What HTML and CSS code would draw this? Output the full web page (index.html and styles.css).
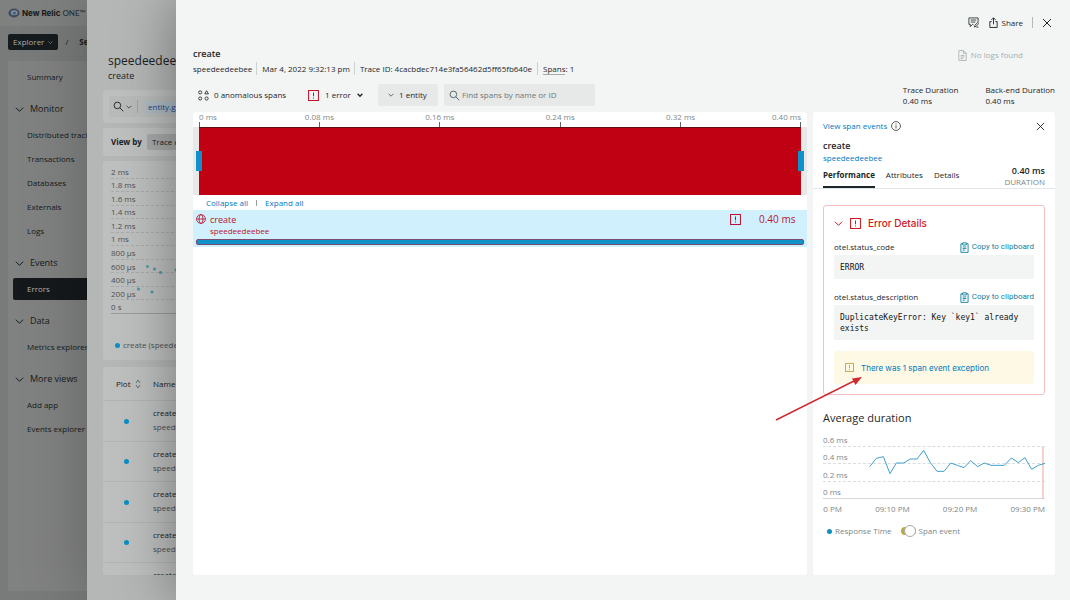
FILE: index.html
```html
<!DOCTYPE html>
<html lang="en">
<head>
<meta charset="utf-8">
<title>New Relic ONE - Trace details</title>
<link rel="stylesheet" href="styles.css">
</head>
<body>
<svg class="defs" aria-hidden="true">
  <symbol id="chev" viewBox="0 0 10 10"><path d="M1 3l4 4 4-4" fill="none" stroke="currentColor" stroke-width="1.1"/></symbol>
  <symbol id="chev-bold" viewBox="0 0 10 10"><path d="M1 3l4 4 4-4" fill="none" stroke="currentColor" stroke-width="2.2"/></symbol>
  <symbol id="alert" viewBox="0 0 12 12"><path d="M.6.6h10.8v10.8H.6zM6 2.8v4M6 8.2v1.2" fill="none" stroke="currentColor" stroke-width="1.1"/></symbol>
  <symbol id="close" viewBox="0 0 10 10"><path d="M1 1l8 8M9 1l-8 8" fill="none" stroke="currentColor"/></symbol>
  <symbol id="search" viewBox="0 0 12 12"><circle cx="4.8" cy="4.8" r="3.6" fill="none" stroke="currentColor"/><path d="M7.5 7.5l3.7 3.7" stroke="currentColor"/></symbol>
  <symbol id="clip" viewBox="0 0 10 12"><path d="M3 1.8H1v9.6h8V1.8H7M3 .8h4v2.4H3zM3 5.4h4M3 7.2h4M3 9h2.4" fill="none" stroke="currentColor"/></symbol>
</svg>

<div class="base">
  <header class="brand">
    <svg class="brand-mark" viewBox="0 0 12 10"><ellipse cx="6" cy="5" rx="5.6" ry="4.4" fill="#3f4b5c"/><ellipse cx="6.2" cy="4.8" rx="3.4" ry="2.5" fill="#8793a5"/><ellipse cx="6.4" cy="5" rx="2" ry="1.6" fill="#4b6185"/></svg>
    <span class="brand-name">New Relic</span><span class="brand-one">ONE™</span>
  </header>
  <div class="crumbs">
    <button class="explorer">Explorer <svg><use href="#chev"/></svg></button>
    <span>/</span><b>Services</b>
  </div>
  <nav class="side">
    <a href="#">Summary</a>
    <h2><svg><use href="#chev"/></svg>Monitor</h2>
    <a href="#">Distributed tracing</a>
    <a href="#">Transactions</a>
    <a href="#">Databases</a>
    <a href="#">Externals</a>
    <a href="#">Logs</a>
    <h2><svg><use href="#chev"/></svg>Events</h2>
    <a href="#" class="active">Errors</a>
    <h2><svg><use href="#chev"/></svg>Data</h2>
    <a href="#">Metrics explorer</a>
    <h2><svg><use href="#chev"/></svg>More views</h2>
    <a href="#">Add app</a>
    <a href="#">Events explorer</a>
  </nav>
</div>

<section class="layer group">
  <div class="group-head"><h1>speedeedeebee</h1><p>create</p></div>
  <div class="card filter">
    <div class="filter-box"><svg class="i11"><use href="#search"/></svg><svg class="i6"><use href="#chev"/></svg><i></i><span class="chip">entity.guid</span></div>
  </div>
  <div class="card viewby"><b>View by</b><button>Trace count</button></div>
  <div class="card scatter">
    <ul><li>2 ms</li><li>1.8 ms</li><li>1.6 ms</li><li>1.4 ms</li><li>1.2 ms</li><li>1 ms</li><li>800 µs</li><li>600 µs</li><li>400 µs</li><li>200 µs</li><li>0 s</li></ul>
    <svg class="dots" width="66" height="40" viewBox="0 0 66 40" fill="#4f9aa5"><circle cx="10.500" cy="6.500" r="1.400"/><circle cx="17.500" cy="9" r="1.600"/><circle cx="23.500" cy="12.500" r="1.600"/><circle cx="1.500" cy="29" r="1.600"/><circle cx="15" cy="32" r="1.600"/><circle cx="39" cy="10" r="1.500"/></svg>
    <p class="legend"><span class="dot"></span>create (speedeedeebee)</p>
  </div>
  <div class="card list">
    <div class="row head"><span>Plot <svg viewBox="0 0 6 10"><path d="M1 4l2-3 2 3M1 6l2 3 2-3" fill="none" stroke="#555a5a" stroke-width=".8"/></svg></span><span>Name</span></div>
    <div class="row"><span class="dot"></span><p>create<small>speedeedeebee</small></p></div>
    <div class="row"><span class="dot"></span><p>create<small>speedeedeebee</small></p></div>
    <div class="row"><span class="dot"></span><p>create<small>speedeedeebee</small></p></div>
    <div class="row"><span class="dot"></span><p>create<small>speedeedeebee</small></p></div>
    <div class="row"><span class="dot"></span><p>create<small>speedeedeebee</small></p></div>
  </div>
</section>

<main class="layer trace">
  <div class="actions">
    <button aria-label="Feedback"><svg class="i11" viewBox="0 0 12 12"><path d="M11 6V1H1v7h1.500v2.500L5 8h1M3 3.300h6M3 5.500h5M7 11l.5-2 3-3 1.200 1.200-3 3zM9 11h2.500" fill="none" stroke="currentColor" stroke-width=".9"/></svg></button>
    <button><svg class="i11" viewBox="0 0 12 12"><path d="M4 5H2v6.400h8V5H8M6 8V1M3.700 3.200L6 .9l2.300 2.300" fill="none" stroke="currentColor"/></svg>Share</button>
    <i></i>
    <button aria-label="Close"><svg class="i10"><use href="#close"/></svg></button>
  </div>
  <div class="heading">
    <div>
      <h1>create</h1>
      <p class="meta"><span>speedeedeebee</span><span>Mar 4, 2022 9:32:13 pm</span><span>Trace ID: 4cacbdec714e3fa56462d5ff65fb640e</span><span><u>Spans</u>: 1</span></p>
    </div>
    <p class="nologs"><svg class="i11" viewBox="0 0 10 12"><path d="M1 .6h5l3 3v7.800H1zM6 .6v3h3M3 6h4M3 7.700h4M3 9.400h2.500" fill="none" stroke="currentColor" stroke-width=".9"/></svg>No logs found</p>
  </div>
  <div class="toolbar">
    <p class="anomalous"><svg class="i11" viewBox="0 0 12 12" fill="none" stroke="#2a3434" stroke-width="1"><circle cx="2.400" cy="2.600" r="1.700"/><path d="M9.400.8l2 3.400h-4z"/><circle cx="2.400" cy="9.300" r="1.700"/><circle cx="9.400" cy="9.300" r="1.700"/></svg>0 anomalous spans</p>
    <button class="errors"><svg class="i11 red"><use href="#alert"/></svg>1 error<svg class="i6"><use href="#chev-bold"/></svg></button>
    <button class="entity"><svg class="i6"><use href="#chev"/></svg>1 entity</button>
    <label class="find"><svg class="i11"><use href="#search"/></svg><input type="text" placeholder="Find spans by name or ID" aria-label="Find spans by name or ID"></label>
    <dl><dt>Trace Duration</dt><dd>0.40 ms</dd></dl>
    <dl><dt>Back-end Duration</dt><dd>0.40 ms</dd></dl>
  </div>

  <div class="panes">
    <section class="pane waterfall">
      <div class="axis"><span>0 ms</span><span>0.08 ms</span><span>0.16 ms</span><span>0.24 ms</span><span>0.32 ms</span><span>0.40 ms</span></div>
      <div class="minimap"><i class="grip"></i><i class="grip end"></i></div>
      <div class="expand"><a href="#">Collapse all</a><i></i><a href="#">Expand all</a></div>
      <div class="span">
        <svg class="i10" viewBox="0 0 12 12" fill="none" stroke="currentColor"><circle cx="6" cy="6" r="5.300"/><ellipse cx="6" cy="6" rx="2.400" ry="5.300"/><path d="M.7 6h10.600"/></svg>
        <p>create<small>speedeedeebee</small></p>
        <svg class="i11"><use href="#alert"/></svg>
        <b>0.40 ms</b>
        <div class="bar"></div>
      </div>
    </section>

    <aside class="pane detail">
      <div class="detail-top"><a href="#">View span events</a><svg class="i10" viewBox="0 0 12 12" fill="none" stroke="#39403f"><circle cx="6" cy="6" r="5.300"/><path d="M6 5.200V9M6 3v1.200"/></svg><button aria-label="Close details"><svg class="i9"><use href="#close"/></svg></button></div>
      <h2>create</h2>
      <a class="svc" href="#">speedeedeebee</a>
      <div class="tabs">
        <button class="on">Performance</button><button>Attributes</button><button>Details</button>
        <p><b>0.40 ms</b>DURATION</p>
      </div>
      <section class="error">
        <h3><svg class="i9"><use href="#chev"/></svg><svg class="i11"><use href="#alert"/></svg>Error Details</h3>
        <div class="field"><span>otel.status_code</span><button><svg><use href="#clip"/></svg>Copy to clipboard</button></div>
        <pre>ERROR</pre>
        <div class="field"><span>otel.status_description</span><button><svg><use href="#clip"/></svg>Copy to clipboard</button></div>
        <pre>DuplicateKeyError: Key `key1` already exists</pre>
        <p class="notice"><svg class="i9"><use href="#alert"/></svg><a href="#">There was 1 span event exception</a></p>
      </section>
      <h4>Average duration</h4>
      <div class="chart">
        <ul><li>0.6 ms</li><li>0.4 ms</li><li>0.2 ms</li><li>0 ms</li></ul>
        <svg viewBox="174 222 666 210" preserveAspectRatio="none"><path d="M834 276V432" fill="none" stroke="#f3b9bb" stroke-width="4"/><polyline fill="none" stroke="#3f9fd2" stroke-width="3" points="314,335 334,310 355,305 375,356 394,324 416,324 436,312 456,312 476,286 496,323 516,349 537,349 557,324 577,331 597,338 617,317 638,335 658,324 678,331 718,331 739,309 760,323 780,308 800,343 820,331 840,325"/></svg>
      </div>
      <div class="times"><span>:00 PM</span><span>09:10 PM</span><span>09:20 PM</span><span>09:30 PM</span></div>
      <div class="keys"><span class="dot"></span>Response Time<label><input type="checkbox" role="switch">Span event</label></div>
    </aside>
    <svg class="arrow" width="90" height="48" viewBox="0 0 90 48"><path d="M1 45L79 6" stroke="#cf2a32" stroke-width="1.500"/><path d="M87 2L77 3.500 80.500 10z" fill="#cf2a32"/></svg>
  </div>
</main>
</body>
</html>
```
FILE: styles.css
```css
* { box-sizing: border-box; margin: 0; padding: 0; }
body { font: 8px/12px "Open Sans", "Noto Sans", sans-serif; color: #1d2729; background: #797b7a; height: 100vh; overflow: hidden; position: relative; }
button { font: inherit; color: inherit; background: none; border: 0; display: inline-flex; align-items: center; }
a { color: #0079bf; text-decoration: none; }
ul { list-style: none; }
i { display: block; }
svg { flex: none; display: block; }
h1, h2, h3, h4 { font-weight: 400; }
.defs { position: absolute; width: 0; height: 0; }
.i6 { width: 6px; height: 6px; }
.i9 { width: 9px; height: 9px; }
.i10 { width: 10px; height: 10px; }
.i11 { width: 11px; height: 11px; }
.dot { width: 5px; height: 5px; border-radius: 50%; background: #0b8fc6; }

/* Entity page */
.base { height: 100%; display: flex; flex-direction: column; color: #151a1b; padding-bottom: 9px; }
.brand { height: 26px; background: #7f8180; display: flex; align-items: center; gap: 2px; padding-left: 8px; font-family: Inter, sans-serif; }
.brand-mark { width: 12px; height: 10px; }
.brand-name { font-weight: 700; }
.brand-one { font: 600 8px Lato, sans-serif; color: #30373d; }
.crumbs { height: 35px; display: flex; align-items: center; gap: 7px; padding: 0 8px 3px; }
.crumbs b { padding-left: 4px; }
.explorer { height: 16px; padding: 0 5px; gap: 4px; background: #161b1d; color: #a9adad; border-radius: 2px; }
.explorer svg { width: 5px; height: 5px; }
.side { flex: 1; margin-left: 8px; padding-top: 4px; background: #808281; border-radius: 2px; }
.side a { display: flex; align-items: center; height: 22px; margin: 1px 0 1px 5px; padding-left: 14px; color: inherit; }
.side a + a { margin-top: 2px; }
.side a.active { background: #15191b; color: #b1b4b4; border-radius: 2px; }
.side h2 { display: flex; align-items: center; gap: 6px; height: 34px; padding: 6px 0 0 7px; font-size: 9px; }
.side h2 svg { width: 9px; height: 9px; }

/* Stacked layers */
.layer { position: absolute; top: 0; right: 0; bottom: 0; display: flex; flex-direction: column; }
.group { left: 87px; background: #b5b7b7; padding: 53px 0 25px 16px; box-shadow: 0 0 60px rgba(0,0,0,.25); color: #1b2122; }
.group h1 { font-size: 12px; line-height: 16px; padding-left: 5px; }
.group-head p { font-size: 9px; line-height: 14px; padding-left: 5px; margin-bottom: 7px; }
.card { background: #bebfbf; border-radius: 3px; }
.filter { padding: 6px; margin-bottom: 5px; }
.filter-box { height: 21px; background: #b9baba; display: flex; align-items: center; gap: 2px; padding-left: 4px; }
.filter-box i { width: 1px; height: 13px; background: #a2a4a4; margin: 0 5px 0 3px; }
.chip { background: #aebac3; color: #17498a; padding: 0 3px; }
.viewby { height: 28px; display: flex; align-items: center; gap: 5px; padding-left: 8px; margin-bottom: 5px; }
.viewby button { height: 16px; padding: 0 5px; background: #a8aaaa; border-radius: 2px; }
.scatter { position: relative; height: 199px; padding: 4px 8px; margin-bottom: 7px; color: #4c5252; }
.scatter ul { display: grid; grid-template-rows: repeat(11, 1fr); height: 149px; line-height: 10px; }
.scatter li { border-bottom: 1px dashed #a9abab; display: flex; align-items: center; padding-top: 1px; }
.scatter li:last-child { border-bottom: 1px solid #9a9c9c; }
.dots { position: absolute; left: 34px; top: 99px; }
.legend { display: flex; align-items: center; gap: 3px; padding: 25px 0 0 4px; }
.list { flex: 1; overflow: hidden; }
.row { display: grid; grid-template-columns: 36px 1fr; gap: 14px; align-items: center; height: 41px; border-bottom: 1px solid #b2b4b4; }
.row:nth-child(odd) { height: 40px; }
.row.head { height: 34px; padding-left: 13px; gap: 1px; }
.row.head span { display: flex; align-items: center; gap: 4px; }
.row.head svg { width: 6px; height: 10px; }
.row .dot { margin-left: 21px; }
.row small { display: block; font-size: 8px; line-height: 16px; color: #4b5152; }

/* Trace drawer */
.trace { left: 176px; background: #f3f4f4; padding: 0 15px 25px 17px; box-shadow: 0 0 55px rgba(0,0,0,.4); }
.actions { height: 45px; display: flex; align-items: center; justify-content: flex-end; gap: 9px; padding-right: 3px; }
.actions button { gap: 3px; }
.actions i { width: 1px; height: 11px; background: #b5b9b9; }
.heading { display: flex; justify-content: space-between; margin-top: 1px; }
.heading h1 { font-size: 9px; line-height: 16px; font-weight: 600; }
.meta { display: flex; line-height: 13px; }
.meta span + span { border-left: 1px solid #cdd1d1; margin-left: 4px; padding-left: 5px; }
.meta span:last-child { margin-left: 5px; }
.meta u { text-decoration: none; border-bottom: 1px solid #a5abab; }
.nologs { display: flex; align-items: center; align-self: flex-start; gap: 3px; padding: 3px 32px 0 0; color: #a6aeae; }
.toolbar { display: flex; align-items: center; margin: 9px 0 6px; height: 22px; }
.anomalous { display: flex; align-items: center; gap: 5px; padding-left: 5px; width: 115px; }
.errors { gap: 6px; width: 70px; }
.red { color: #c1132c; }
.entity { height: 22px; padding: 0 10px; gap: 5px; width: 60px; background: #e7e9e9; border-radius: 2px; }
.find { height: 22px; width: 151px; display: flex; align-items: center; gap: 2px; margin: 0 auto 0 6px; padding-left: 5px; background: #e7e9e9; border-radius: 2px; color: #535e5f; }
.find input { flex: 1; min-width: 0; border: 0; background: none; font: inherit; color: #293338; outline: 0; }
.find input::placeholder { color: #6e7777; opacity: 1; }
.toolbar dl { line-height: 11px; margin-left: 27px; }
.panes { position: relative; flex: 1; display: grid; grid-template-columns: 1fr 242px; gap: 6px; }
.pane { background: #fff; border-radius: 3px; }
.axis { display: grid; grid-template-columns: 1fr repeat(4, 2fr) 1fr; padding: 0 6px; height: 15px; line-height: 10px; color: #7e8787; }
.axis span { display: flex; flex-direction: column; align-items: center; white-space: nowrap; }
.axis span::after { content: ""; width: 1px; height: 5px; background: #5c6464; }
.axis span:first-child { align-items: flex-start; }
.axis span:last-child { align-items: flex-end; }
.minimap { position: relative; height: 68px; background: #c00013; border: solid #e7e9e9; border-width: 0 6px; box-shadow: inset 0 1px #5d1015; }
.grip { position: absolute; left: -3px; top: 24px; width: 6px; height: 20px; background: #0f92c9; }
.grip.end { left: auto; right: -3px; }
.expand { height: 15px; display: flex; align-items: center; gap: 8px; padding-left: 13px; }
.expand i { width: 1px; height: 6px; background: #9ba1a1; }
.span { display: grid; grid-template-columns: 10px 1fr 25px 45px; column-gap: 4px; height: 37px; padding: 4px 3px 2px; background: #d0f0fd; color: #b81330; font-size: 9px; line-height: 11px; }
.span small { display: block; font-size: 8px; }
.span b { font-weight: 400; font-size: 10px; white-space: nowrap; }
.bar { grid-column: 1 / -1; height: 6px; margin-top: 3px; background: #0f92c9; border: 1px solid #7b4a6c; border-radius: 2px; }

/* Span details */
.detail { display: flex; flex-direction: column; padding: 7px 10px 20px; }
.detail-top { display: flex; align-items: center; gap: 4px; height: 14px; }
.detail-top button { margin-left: auto; }
.detail h2 { font-size: 9px; font-weight: 600; line-height: 12px; margin-top: 7px; }
.svc { line-height: 12px; }
.tabs { display: flex; gap: 11px; height: 25px; margin: 0 -10px; padding: 0 10px; border-bottom: 1px solid #e3e6e6; }
.tabs button { border-bottom: 2px solid transparent; }
.tabs .on { font-weight: 700; border-color: #1d2729; }
.tabs p { margin-left: auto; text-align: right; color: #7d8686; line-height: 11px; padding-top: 1px; }
.tabs b { display: block; font-size: 9px; font-weight: 600; color: #1d2729; }
.error { margin-top: 16px; padding: 9px 10px 10px; border: 1px solid #f6bfc0; border-radius: 3px; }
.error h3 { display: flex; align-items: center; gap: 7px; font: 500 10px/16px Inter, sans-serif; margin-bottom: 9px; color: #cf1722; }
.field { display: flex; justify-content: space-between; align-items: center; height: 14px; }
.field button { gap: 3px; color: #0f7f9e; font-family: Roboto, sans-serif; }
.field svg { width: 9px; height: 11px; }
.error pre { font: 8px/11px "DejaVu Sans Mono", monospace; white-space: pre-wrap; background: #f3f4f4; padding: 7px 6px 6px; margin: 1px 0 11px; color: #101617; }
.notice { display: flex; align-items: center; gap: 7px; height: 33px; padding-left: 11px; background: #fef9e5; border-radius: 3px; color: #b5932c; font-family: Inter, sans-serif; }
.detail h4 { font-size: 11px; line-height: 16px; margin-top: 15px; }
.chart { position: relative; height: 70px; margin-top: 3px; color: #7d8686; }
.chart ul { height: 70px; display: grid; grid-template-rows: repeat(4, 1fr); line-height: 10px; }
.chart li { display: flex; align-items: center; padding-top: 5px; border-bottom: 1px dashed #d9dddd; }
.chart li:last-child { border-bottom: 1px solid #d5d9d9; }
.chart svg { position: absolute; left: 0; top: 0; width: 100%; height: 100%; }
.times { display: flex; justify-content: space-between; line-height: 12px; margin-top: 4px; color: #7d8686; white-space: nowrap; }
.times span:first-child { width: 19px; display: flex; justify-content: flex-end; overflow: hidden; }
.keys { display: flex; align-items: center; gap: 3px; margin: 10px 0 0 4px; color: #7d8686; }
.keys label { display: flex; align-items: center; gap: 3px; margin-left: 6px; }
.keys input { appearance: none; width: 15px; height: 8px; border-radius: 5px; background: #bfa93f; display: flex; justify-content: flex-end; align-items: center; }
.keys input::before { content: ""; width: 10px; height: 10px; flex: none; border-radius: 50%; background: #fff; border: 1px solid #a6acac; }
.arrow { position: absolute; right: 190px; top: 263px; }
```
